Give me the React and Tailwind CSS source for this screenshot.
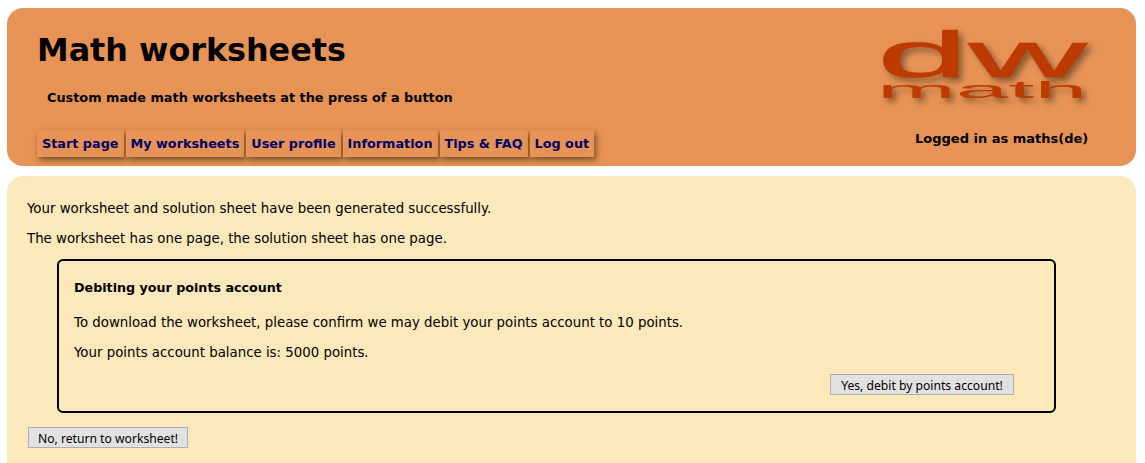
import React from 'react';

const navItems = ['Start page', 'My worksheets', 'User profile', 'Information', 'Tips & FAQ', 'Log out'];

const DwLogo = () => (
  <svg width="220" height="84" viewBox="0 0 220 84" className="overflow-visible [filter:drop-shadow(4px_4px_3px_rgba(60,40,20,0.55))]">
    <text x="0" y="53" fontFamily="Liberation Sans, sans-serif" fontSize="64" fill="#BD3A00" stroke="#BD3A00" strokeWidth="0.6" textLength="210" lengthAdjust="spacingAndGlyphs">dw</text>
    <text x="0" y="74" fontFamily="Liberation Sans, sans-serif" fontSize="24" fill="#BD3A00" textLength="210" lengthAdjust="spacingAndGlyphs">math</text>
  </svg>
);

const App = () => {
  const btnCls = "h-[21px] px-[8px] pt-[4px] bg-[#e1e1e1] border border-[#adadad] text-[12.15px] leading-none text-black font-['Noto_Sans',sans-serif]";

  return (
    <div className="bg-white h-[463px] overflow-hidden pl-[7px] pt-[8px] font-['DejaVu_Sans','Liberation_Sans',sans-serif] text-[13.33px] text-black">
      <header className="relative w-[1129px] h-[158px] rounded-[16px] bg-[#e79355] pl-[30px] pt-[22px]">
        <h1 className="text-[31.8px] leading-[40px] font-bold">Math worksheets</h1>
        <p className="mt-[20px] ml-[10px] text-[12.85px] leading-[16px] font-bold">Custom made math worksheets at the press of a button</p>
        <nav className="mt-[24px] flex gap-[2px]">
          {navItems.map(item => (
            <a key={item} className="h-[27px] px-[5px] flex items-center bg-[#e79355] text-[12.8px] font-bold text-[#000066] shadow-[2px_3px_6px_rgba(60,40,20,0.65)]">
              {item}
            </a>
          ))}
        </nav>
        <div className="absolute left-[870px] top-[16px]"><DwLogo /></div>
        <div className="absolute left-[908px] top-[123px] text-[13px] leading-[16px] font-bold">Logged in as maths(de)</div>
      </header>

      <main className="mt-[10px] w-[1129px] h-[300px] rounded-t-[16px] bg-[#fbe9bb] pl-[20px] pt-[25px]">
        <p className="leading-[16px]">Your worksheet and solution sheet have been generated successfully.</p>
        <p className="mt-[14px] leading-[16px]">The worksheet has one page, the solution sheet has one page.</p>
        <section className="mt-[12px] ml-[30px] w-[999px] h-[154px] rounded-[6px] border-2 border-black pl-[15px] pt-[19px]">
          <h2 className="text-[12.7px] font-bold leading-[16px]">Debiting your points account</h2>
          <p className="mt-[19px] leading-[16px]">To download the worksheet, please confirm we may debit your points account to 10 points.</p>
          <p className="mt-[14px] leading-[16px]">Your points account balance is: 5000 points.</p>
          <div className="mt-[13px] flex justify-end pr-[40px]">
            <button className={`${btnCls} w-[184px]`}>Yes, debit by points account!</button>
          </div>
        </section>
        <button className={`${btnCls} mt-[14px] ml-[1px] w-[160px]`}>No, return to worksheet!</button>
      </main>
    </div>
  );
};

export default App;
